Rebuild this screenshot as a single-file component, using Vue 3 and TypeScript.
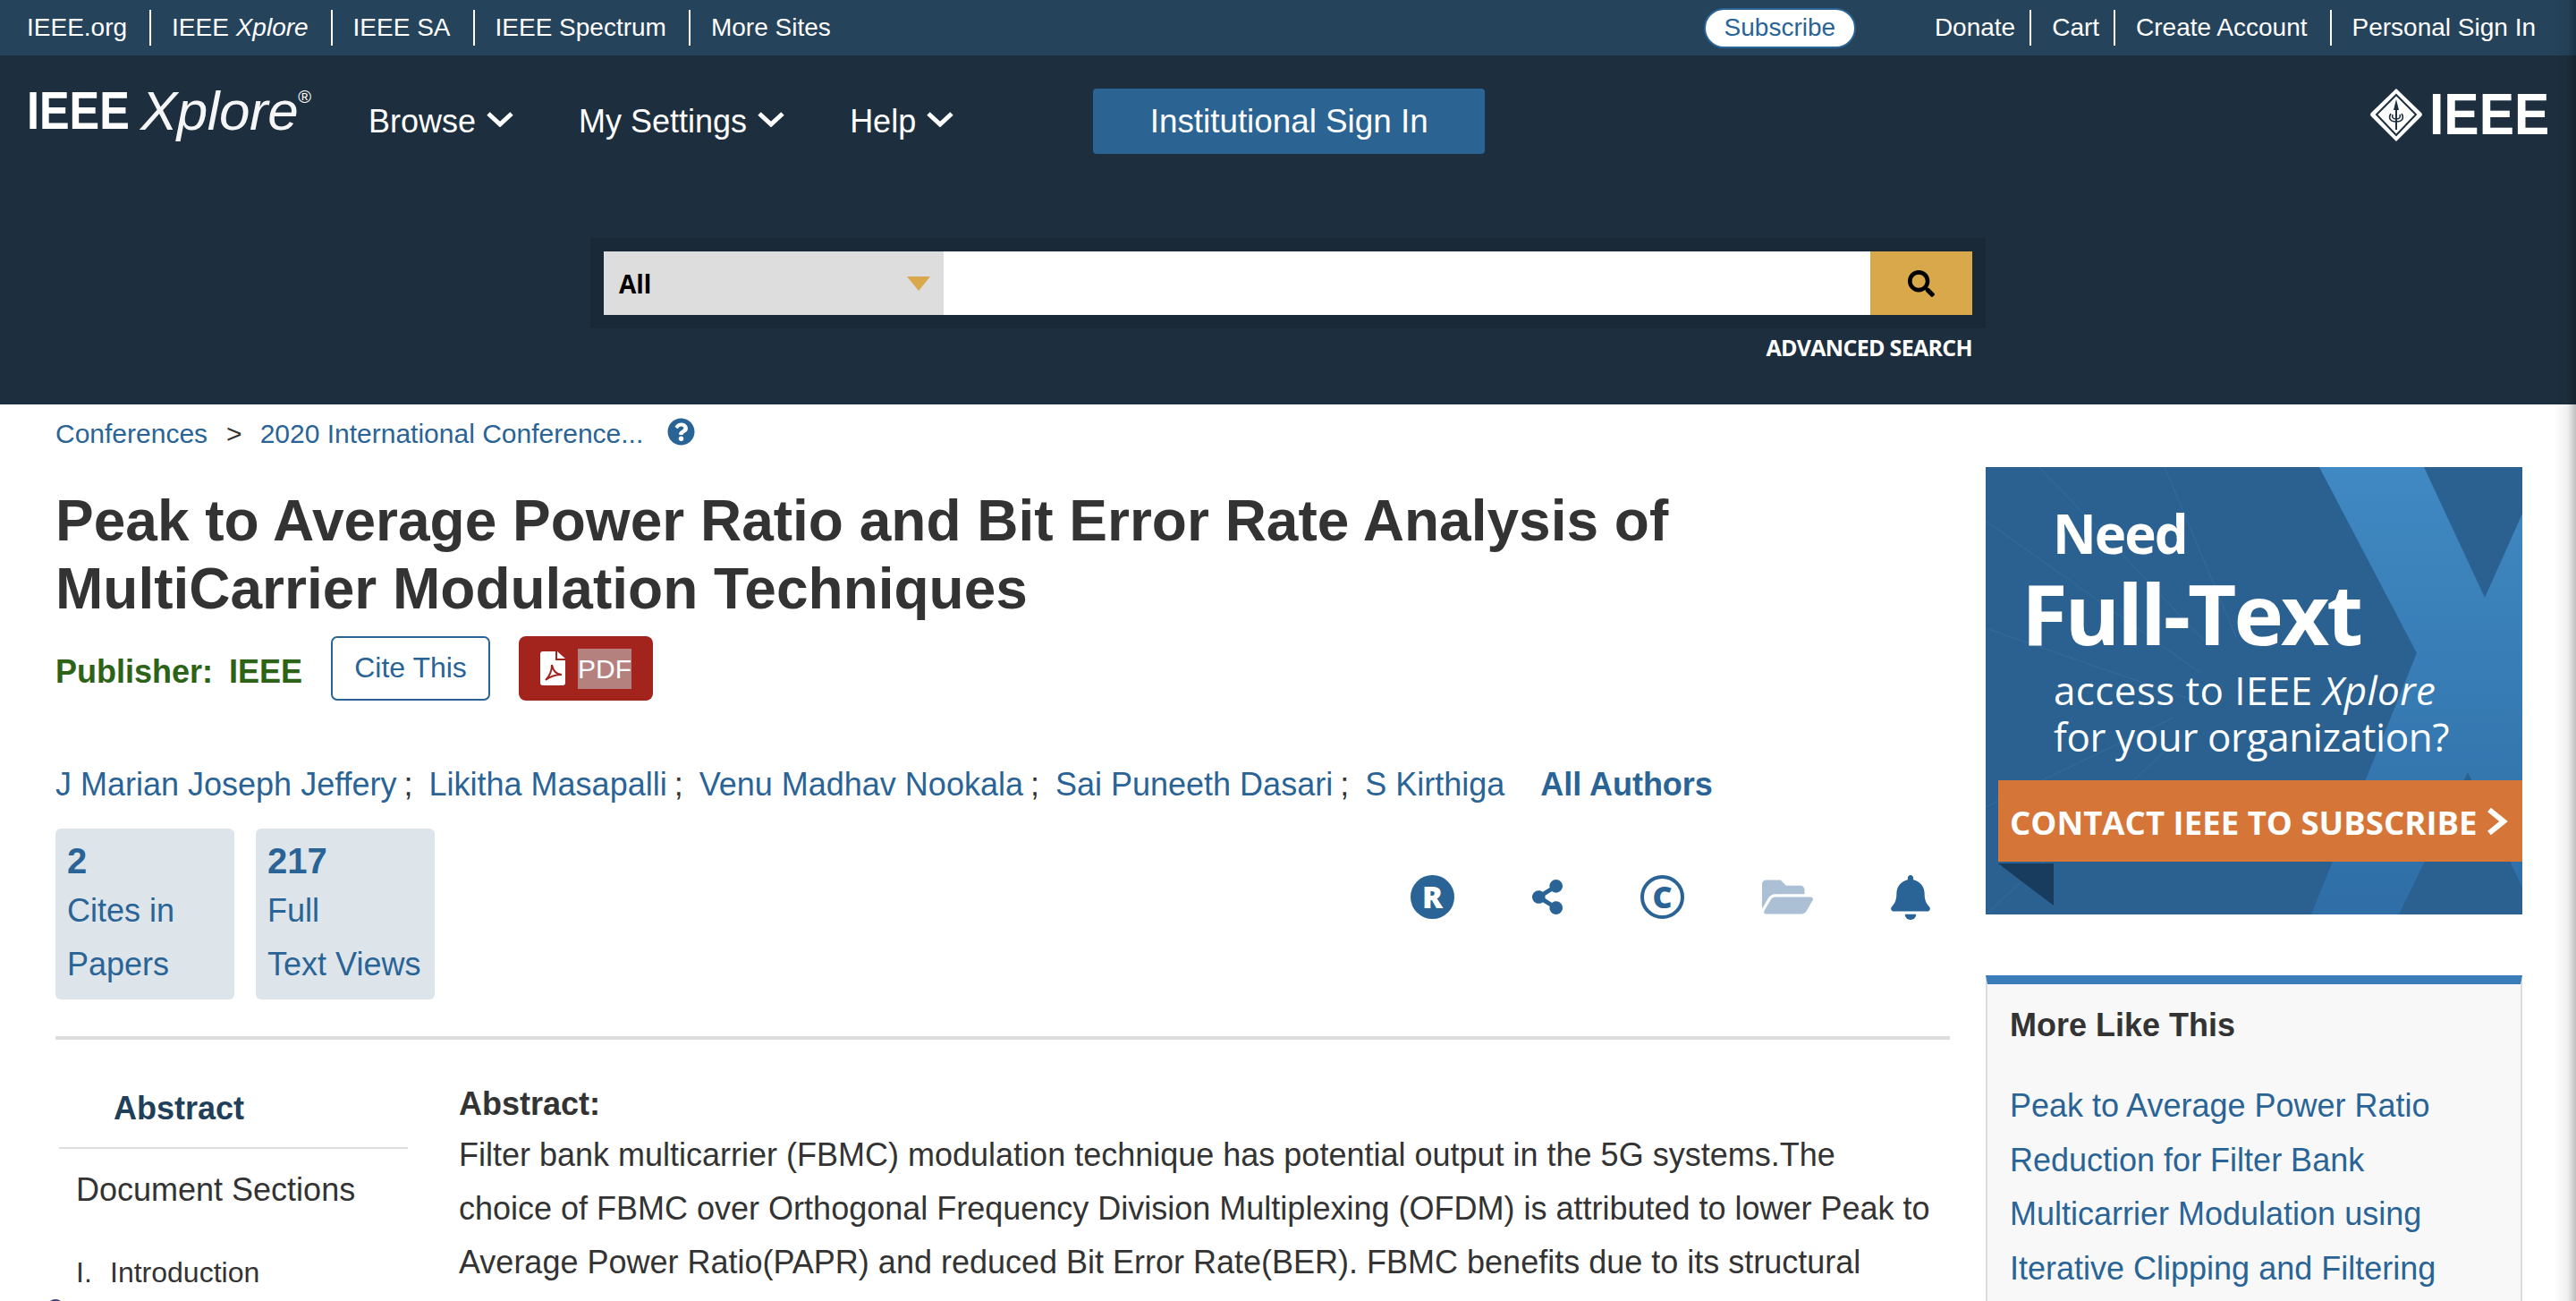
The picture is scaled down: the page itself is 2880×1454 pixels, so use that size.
<script setup lang="ts">
const leftSites = ['IEEE.org', 'IEEE Xplore', 'IEEE SA', 'IEEE Spectrum', 'More Sites']
const rightSites = [
  { label: 'Donate', tight: true },
  { label: 'Cart', tight: true },
  { label: 'Create Account', tight: false },
  { label: 'Personal Sign In', tight: false },
]
const navItems = ['Browse', 'My Settings', 'Help']
const authors = ['J Marian Joseph Jeffery', 'Likitha Masapalli', 'Venu Madhav Nookala', 'Sai Puneeth Dasari']
const related = ['Peak to Average Power Ratio', 'Reduction for Filter Bank', 'Multicarrier Modulation using', 'Iterative Clipping and Filtering']
const abstractLines = [
  'Filter bank multicarrier (FBMC) modulation technique has potential output in the 5G systems.The',
  'choice of FBMC over Orthogonal Frequency Division Multiplexing (OFDM) is attributed to lower Peak to',
  'Average Power Ratio(PAPR) and reduced Bit Error Rate(BER). FBMC benefits due to its structural',
]
</script>

<template>
  <div class="app">
    <div class="topbar">
      <div class="sites">
        <a v-for="s in leftSites" :key="s" class="site">
          <template v-if="s === 'IEEE Xplore'">IEEE <i>Xplore</i></template>
          <template v-else>{{ s }}</template>
        </a>
      </div>
      <div class="sites">
        <a class="subscribe">Subscribe</a>
        <a v-for="s in rightSites" :key="s.label" class="site" :class="{ tight: s.tight }">{{ s.label }}</a>
      </div>
    </div>

    <header class="header">
      <div class="nav">
        <div class="brand">
          <span class="brand-ieee">IEEE</span>
          <span class="brand-xplore">Xplore</span>
          <sup class="brand-reg">®</sup>
        </div>
        <div class="menu">
          <a v-for="n in navItems" :key="n" class="menu-item">
            {{ n }}
            <svg class="chev" width="30" height="18" viewBox="0 0 30 18"><path d="M2 3 15 15 28 3" fill="none" stroke="#fff" stroke-width="5" /></svg>
          </a>
        </div>
        <a class="signin">Institutional Sign In</a>
        <div class="ieee-logo">
          <svg width="58" height="59" viewBox="0 0 58 59">
            <path d="M29 0 57 27a3 3 0 0 1 0 4L29 59 1 31a3 3 0 0 1 0-4z" fill="#fff" />
            <path d="M29 7 51 29 29 52 7 29z" fill="none" stroke="#1d2f3e" stroke-width="2" />
            <path d="M29 12 32 24H30V46H28V24H26z" fill="#1d2f3e" />
            <path d="M23 28c-3 5-1 9 6 9s9-4 6-9M25 29c-1 3 0 5 4 5s5-2 4-5" fill="none" stroke="#1d2f3e" stroke-width="1.6" />
          </svg>
          <span class="ieee-word">IEEE</span>
        </div>
      </div>

      <div class="search">
        <div class="search-frame">
          <div class="search-select">
            <span>All</span>
            <svg width="26" height="16" viewBox="0 0 26 16"><path d="M0 0H26L13 16z" fill="#d9a84a" /></svg>
          </div>
          <div class="search-input"></div>
          <div class="search-btn">
            <svg width="30" height="30" viewBox="0 0 512 512"><path d="M505 442.7L405.3 343c-4.5-4.5-10.6-7-17-7H372c27.6-35.3 44-79.7 44-128C416 93.1 322.9 0 208 0S0 93.1 0 208s93.1 208 208 208c48.3 0 92.7-16.4 128-44v16.3c0 6.4 2.5 12.5 7 17l99.7 99.7c9.4 9.4 24.6 9.4 33.9 0l28.3-28.3c9.4-9.4 9.4-24.6.1-34zM208 336c-70.7 0-128-57.2-128-128 0-70.7 57.2-128 128-128 70.7 0 128 57.2 128 128 0 70.7-57.2 128-128 128z" /></svg>
          </div>
        </div>
        <div class="advanced">ADVANCED SEARCH</div>
      </div>
    </header>

    <main class="page">
      <div class="crumbs">
        <a>Conferences</a>
        <span class="crumb-sep">&gt;</span>
        <a>2020 International Conference...</a>
        <svg class="crumb-help" width="31" height="31" viewBox="0 0 512 512"><path fill="#2a6496" d="M504 256c0 136.997-111.043 248-248 248S8 392.997 8 256C8 119.083 119.043 8 256 8s248 111.083 248 248zM262.655 90c-54.497 0-89.255 22.957-116.549 63.758-3.536 5.286-2.353 12.415 2.715 16.258l34.699 26.31c5.205 3.947 12.621 3.008 16.665-2.122 17.864-22.658 30.113-35.797 57.303-35.797 20.429 0 45.698 13.148 45.698 32.958 0 14.976-12.363 22.667-32.534 33.976C247.128 238.528 216 254.941 216 296v4c0 6.627 5.373 12 12 12h56c6.627 0 12-5.373 12-12v-1.333c0-28.462 83.186-29.647 83.186-106.667 0-58.002-60.165-102-116.531-102zM256 338c-25.365 0-46 20.635-46 46 0 25.364 20.635 46 46 46s46-20.636 46-46c0-25.365-20.635-46-46-46z" /></svg>
      </div>

      <section class="main">
        <h1 class="title">Peak to Average Power Ratio and Bit Error Rate Analysis of<br />MultiCarrier Modulation Techniques</h1>

        <div class="pub-row">
          <span class="publisher">Publisher:&nbsp; IEEE</span>
          <a class="cite">Cite This</a>
          <a class="pdf">
            <svg width="28" height="38" viewBox="0 0 28 38">
              <path d="M0 3a3 3 0 0 1 3-3H17V10H28V35a3 3 0 0 1-3 3H3a3 3 0 0 1-3-3z" fill="#fff" />
              <path d="M19 0 28 8H19z" fill="#fff" />
              <path d="M6 32C10 28 13 21 13 15 14 21 18 26 24 26 18 26 11 28 6 32z" fill="none" stroke="#a3241c" stroke-width="2" />
            </svg>
            <span class="pdf-text">PDF</span>
          </a>
        </div>

        <div class="authors">
          <span v-for="a in authors" :key="a" class="author"><a>{{ a }}</a><span class="semi">;</span></span>
          <a>S Kirthiga</a>
          <a class="all-authors">All Authors</a>
        </div>

        <div class="metrics">
          <div class="stat">
            <div class="stat-num">2</div>
            <div>Cites in</div>
            <div>Papers</div>
          </div>
          <div class="stat">
            <div class="stat-num">217</div>
            <div>Full</div>
            <div>Text Views</div>
          </div>
          <div class="tools">
            <svg width="49" height="49" viewBox="0 0 49 49">
              <circle cx="24.500" cy="24.500" r="24.500" fill="#2a6496" />
              <text x="24.500" y="36.500" text-anchor="middle" class="tool-letter" fill="#fff">R</text>
            </svg>
            <svg width="34" height="39" viewBox="0 0 448 512"><path fill="#2a6496" d="M352 320c-22.608 0-43.387 7.819-59.79 20.895l-102.486-64.054a96.551 96.551 0 0 0 0-41.683l102.486-64.054C308.613 184.181 329.392 192 352 192c53.019 0 96-42.981 96-96S405.019 0 352 0s-96 42.981-96 96c0 7.158.79 14.13 2.276 20.841L155.79 180.895C139.387 167.819 118.608 160 96 160c-53.019 0-96 42.981-96 96s42.981 96 96 96c22.608 0 43.387-7.819 59.79-20.895l102.486 64.054A96.301 96.301 0 0 0 256 416c0 53.019 42.981 96 96 96s96-42.981 96-96-42.981-96-96-96z" /></svg>
            <svg width="49" height="49" viewBox="0 0 49 49">
              <circle cx="24.500" cy="24.500" r="22.500" fill="none" stroke="#2a6496" stroke-width="4" />
              <text x="24.500" y="36.500" text-anchor="middle" class="tool-letter" fill="#2a6496">C</text>
            </svg>
            <svg width="57" height="51" viewBox="0 0 576 512"><path fill="#abc0d5" d="M572.694 292.093L500.27 416.248A63.997 63.997 0 0 1 444.989 448H45.025c-18.523 0-30.064-20.093-20.731-36.093l72.424-124.155A64 64 0 0 1 152 256h399.964c18.523 0 30.064 20.093 20.73 36.093zM152 224h328v-48c0-26.51-21.49-48-48-48H272l-64-64H48C21.49 64 0 85.49 0 112v278.046l69.077-118.418C86.214 242.25 117.989 224 152 224z" /></svg>
            <svg width="44" height="50" viewBox="0 0 448 512"><path fill="#2a6496" d="M224 512c35.32 0 63.97-28.65 63.97-64H160.03c0 35.35 28.65 64 63.97 64zm215.39-149.71c-19.32-20.76-55.47-51.99-55.47-154.29 0-77.7-54.48-139.9-127.94-155.16V32c0-17.67-14.32-32-31.98-32s-31.98 14.33-31.98 32v20.84C118.56 68.1 64.08 130.3 64.08 208c0 102.3-36.15 133.53-55.47 154.29-6 6.45-8.66 14.16-8.61 21.71.11 16.4 12.98 32 32.1 32h383.8c19.12 0 32-15.6 32.1-32 .05-7.55-2.61-15.27-8.61-21.71z" /></svg>
          </div>
        </div>

        <div class="divider"></div>

        <div class="body-cols">
          <nav class="toc">
            <div class="toc-current">Abstract</div>
            <div class="toc-title">Document Sections</div>
            <div class="toc-item"><span class="toc-num">I.</span>Introduction</div>
          </nav>
          <article class="abstract">
            <div class="abstract-head">Abstract:</div>
            <div v-for="l in abstractLines" :key="l">{{ l }}</div>
          </article>
        </div>
      </section>

      <aside class="aside">
        <div class="ad">
          <svg class="ad-bg" width="600" height="500" viewBox="0 0 600 500">
            <defs>
              <linearGradient id="xfill" x1="0" y1="0" x2="0" y2="1">
                <stop offset="0" stop-color="#4089c2" />
                <stop offset="1" stop-color="#2f6ea6" />
              </linearGradient>
            </defs>
            <rect width="600" height="500" fill="#2b6191" />
            <g stroke="#3b77a8" stroke-width="1" opacity=".55">
              <path d="M0 60 240 230M60 0 250 200M0 180 230 260M0 500 220 300M0 380 210 280M200 0 280 190" />
            </g>
            <polygon points="373,0 490,0 558,146 600,52 600,470 539,341 462,500 364,500 482,208" fill="url(#xfill)" />
            <polygon points="14,443 76,443 76,490" fill="#173c5e" />
          </svg>
          <div class="ad-need">Need</div>
          <div class="ad-full">Full-Text</div>
          <div class="ad-line ad-first">access to IEEE <i>Xplore</i></div>
          <div class="ad-line ad-second">for your organization?</div>
          <div class="ad-bar">
            <span>CONTACT IEEE TO SUBSCRIBE</span>
            <svg width="24" height="32" viewBox="0 0 24 32"><path d="M3 3 19 16 3 29" fill="none" stroke="#fff" stroke-width="6" /></svg>
          </div>
        </div>

        <div class="more">
          <div class="more-title">More Like This</div>
          <a v-for="r in related" :key="r" class="more-link">{{ r }}</a>
        </div>
      </aside>
    </main>

    <div class="edge-shade"></div>
    <div class="corner-bubble"></div>
  </div>
</template>

<style scoped>
.app {
  position: relative;
  height: 1454px;
  overflow: hidden;
  background: #fff;
  font-family: "Liberation Sans", Arial, sans-serif;
  color: #333;
  font-size: 36px;
}

a {
  color: #2a6496;
}

.topbar {
  height: 62px;
  padding: 0 45px 0 30px;
  display: flex;
  align-items: center;
  justify-content: space-between;
  background: #25435b;
  font-size: 28px;
}

.sites {
  display: flex;
  align-items: center;
}

.site {
  height: 40px;
  line-height: 39px;
  padding: 0 25px 0 23px;
  border-right: 2px solid #fff;
  color: #fff;
  white-space: nowrap;
}

.site.tight {
  padding-right: 16px;
}

.site:first-child {
  padding-left: 0;
}

.site:last-child {
  padding-right: 0;
  border-right: none;
}

.subscribe + .site {
  padding-left: 0;
}

.subscribe {
  width: 170px;
  height: 45px;
  margin-right: 88px;
  box-sizing: border-box;
  border: 2px solid #2a6496;
  border-radius: 23px;
  background: #fff;
  text-align: center;
  line-height: 40px;
}

.header {
  height: 390px;
  background: #1d2f3e;
}

.nav {
  height: 74px;
  padding: 37px 30px 0;
  display: flex;
  align-items: center;
  color: #fff;
}

.brand {
  width: 382px;
  flex: none;
  display: flex;
  align-items: flex-start;
  margin-top: -24px;
  line-height: 72px;
}

.brand-ieee {
  width: 115px;
  flex: none;
  font-size: 60px;
  font-weight: 700;
  transform: scaleX(0.84);
  transform-origin: left center;
}

.brand-xplore {
  margin-left: 12px;
  font-size: 62px;
  font-style: italic;
  letter-spacing: -0.5px;
  opacity: 0.96;
}

.brand-reg {
  font-size: 20px;
  line-height: 1;
  margin-top: 10px;
}

.menu {
  display: flex;
}

.menu-item {
  display: flex;
  align-items: center;
  gap: 12px;
  margin-right: 73px;
  color: #fff;
  white-space: nowrap;
}

.chev {
  margin-top: -6px;
}

.signin {
  width: 438px;
  height: 73px;
  margin-left: 83px;
  margin-top: -2px;
  border-radius: 4px;
  background: #2b6493;
  color: #fff;
  text-align: center;
  line-height: 73px;
  font-size: 36.800px;
}

.ieee-logo {
  margin-left: auto;
  margin-top: -16px;
  display: flex;
  align-items: center;
  gap: 8px;
  height: 60px;
}

.ieee-word {
  width: 134px;
  font-size: 64px;
  font-weight: 700;
  line-height: 60px;
  transform: scaleX(0.92);
  transform-origin: left center;
}

.search {
  width: 1560px;
  margin: 93px auto 0;
}

.search-frame {
  height: 71px;
  padding: 15px;
  display: flex;
  background: #192938;
}

.search-select {
  width: 380px;
  box-sizing: border-box;
  padding: 0 15px 0 17px;
  display: flex;
  align-items: center;
  justify-content: space-between;
  background: #dddddd;
  color: #000;
  font-size: 28px;
  font-weight: 700;
  font-family: "Open Sans", sans-serif;
}

.search-input {
  flex: 1;
  background: #fff;
}

.search-btn {
  width: 114px;
  display: flex;
  align-items: center;
  justify-content: center;
  background: #d9a84a;
}

.advanced {
  margin-top: 1px;
  padding-right: 15px;
  text-align: right;
  color: #fff;
  font-family: "Open Sans", sans-serif;
  font-size: 25px;
  font-weight: 700;
  letter-spacing: -0.7px;
  line-height: 40px;
}

.page {
  padding: 0 60px 0 62px;
  height: 1002px;
  box-sizing: border-box;
  display: grid;
  grid-template-columns: 2118px 600px;
  grid-template-rows: 70px 1fr;
  column-gap: 40px;
}

.crumbs {
  grid-column: 1 / -1;
  display: flex;
  align-items: center;
  height: 66px;
  font-size: 30px;
}

.crumb-sep {
  margin: 0 20px 0 21px;
}

.crumb-help {
  margin-left: 27px;
  margin-top: -6px;
}

.main {
  min-width: 0;
}

.title {
  margin: 22px 0 0;
  font-size: 64px;
  line-height: 76px;
  font-weight: 700;
  color: #333;
}

.pub-row {
  margin-top: 15px;
  display: flex;
  align-items: center;
  height: 72px;
}

.publisher {
  width: 308px;
  margin-top: 8px;
  font-weight: 700;
  color: #2c6317;
  word-spacing: -1px;
}

.cite {
  width: 178px;
  height: 72px;
  box-sizing: border-box;
  border: 2px solid #2a6496;
  border-radius: 7px;
  font-size: 32px;
  text-align: center;
  line-height: 66px;
}

.pdf {
  width: 150px;
  height: 72px;
  margin-left: 32px;
  box-sizing: border-box;
  padding-left: 24px;
  display: flex;
  align-items: center;
  gap: 14px;
  border-radius: 8px;
  background: #a3241c;
}

.pdf-text {
  height: 45px;
  line-height: 45px;
  background: #b5817f;
  color: #fff;
  font-size: 30px;
}

.authors {
  margin-top: 64px;
  height: 60px;
  line-height: 60px;
  display: flex;
  white-space: nowrap;
}

.author {
  margin-right: 18px;
}

.semi {
  margin-left: 8px;
  color: #333;
}

.all-authors {
  margin-left: 40px;
  font-weight: 700;
}

.metrics {
  margin-top: 19px;
  display: flex;
  gap: 24px;
}

.stat {
  width: 200px;
  height: 191px;
  box-sizing: border-box;
  padding: 10px 0 0 13px;
  border-radius: 6px;
  background: #dde5ea;
  color: #2a6496;
  line-height: 60px;
}

.stat-num {
  height: 52px;
  line-height: 52px;
  font-size: 40px;
  font-weight: 700;
}

.tools {
  margin-left: auto;
  padding: 51px 22px 0 0;
  display: flex;
  align-items: center;
  align-self: flex-start;
  gap: 87px;
}

.tool-letter {
  font-family: "Open Sans", sans-serif;
  font-size: 34px;
  font-weight: 800;
}

.divider {
  margin-top: 41px;
  height: 4px;
  background: #ddd;
}

.body-cols {
  display: flex;
  margin-top: 42px;
}

.toc {
  width: 390px;
  margin-left: 4px;
  flex: none;
}

.toc-current {
  height: 80px;
  padding: 5px 0 0 61px;
  box-sizing: border-box;
  border-bottom: 2px solid #ddd;
  line-height: 60px;
  font-weight: 700;
  color: #1f3f5a;
}

.toc-title {
  margin-top: 16px;
  padding-left: 19px;
  line-height: 60px;
}

.toc-item {
  margin-top: 32px;
  padding-left: 19px;
  display: flex;
  font-size: 32px;
  line-height: 60px;
}

.toc-num {
  width: 38px;
}

.abstract {
  margin-left: 57px;
  line-height: 60px;
  white-space: nowrap;
}

.abstract-head {
  font-weight: 700;
  height: 57px;
}

.aside {
  display: flex;
  flex-direction: column;
  min-height: 0;
}

.ad {
  position: relative;
  width: 600px;
  height: 500px;
  flex: none;
  overflow: hidden;
  color: #fff;
  font-family: "Open Sans", sans-serif;
}

.ad-bg {
  position: absolute;
  inset: 0;
}

.ad-need,
.ad-full,
.ad-line,
.ad-bar {
  position: relative;
}

.ad-need {
  margin: 39px 0 0 75px;
  font-size: 60px;
  font-weight: 700;
  line-height: 70px;
  letter-spacing: -2px;
}

.ad-full {
  margin: 4px 0 0 40px;
  font-size: 94px;
  font-weight: 700;
  line-height: 100px;
  letter-spacing: -3px;
}

.ad-line {
  margin-left: 76px;
  font-size: 44px;
  line-height: 49px;
}

.ad-first {
  margin-top: 12px;
  letter-spacing: 0.4px;
}

.ad-second {
  margin-top: 3px;
  letter-spacing: -0.4px;
}

.ad-bar {
  margin: 24px 0 0 14px;
  height: 91px;
  padding-left: 13px;
  display: flex;
  align-items: center;
  gap: 10px;
  background: #d57638;
  font-size: 36.600px;
  font-weight: 700;
  white-space: nowrap;
}

.ad-bar span {
  margin-top: 2px;
}

.more {
  margin-top: 68px;
  flex: 1;
  box-sizing: border-box;
  padding: 0 25px;
  border: 2px solid #ddd;
  border-top: 10px solid #3a7db8;
  border-bottom: none;
  background: #f8f8f8;
}

.more-title {
  margin-top: 26px;
  margin-bottom: 40px;
  line-height: 40px;
  font-weight: 700;
}

.more-link {
  display: block;
  line-height: 60.500px;
  white-space: nowrap;
}

.edge-shade {
  position: absolute;
  top: 0;
  right: 0;
  bottom: 0;
  width: 24px;
  background: linear-gradient(to right, rgba(0, 0, 0, 0), rgba(0, 0, 0, 0.06) 60%, rgba(0, 0, 0, 0.25));
  pointer-events: none;
}

.corner-bubble {
  position: absolute;
  left: 52px;
  top: 1452px;
  width: 20px;
  height: 20px;
  border-radius: 50%;
  background: #3f3d7c;
}
</style>

<style>
html,
body {
  margin: 0;
  overflow: hidden;
}
</style>
